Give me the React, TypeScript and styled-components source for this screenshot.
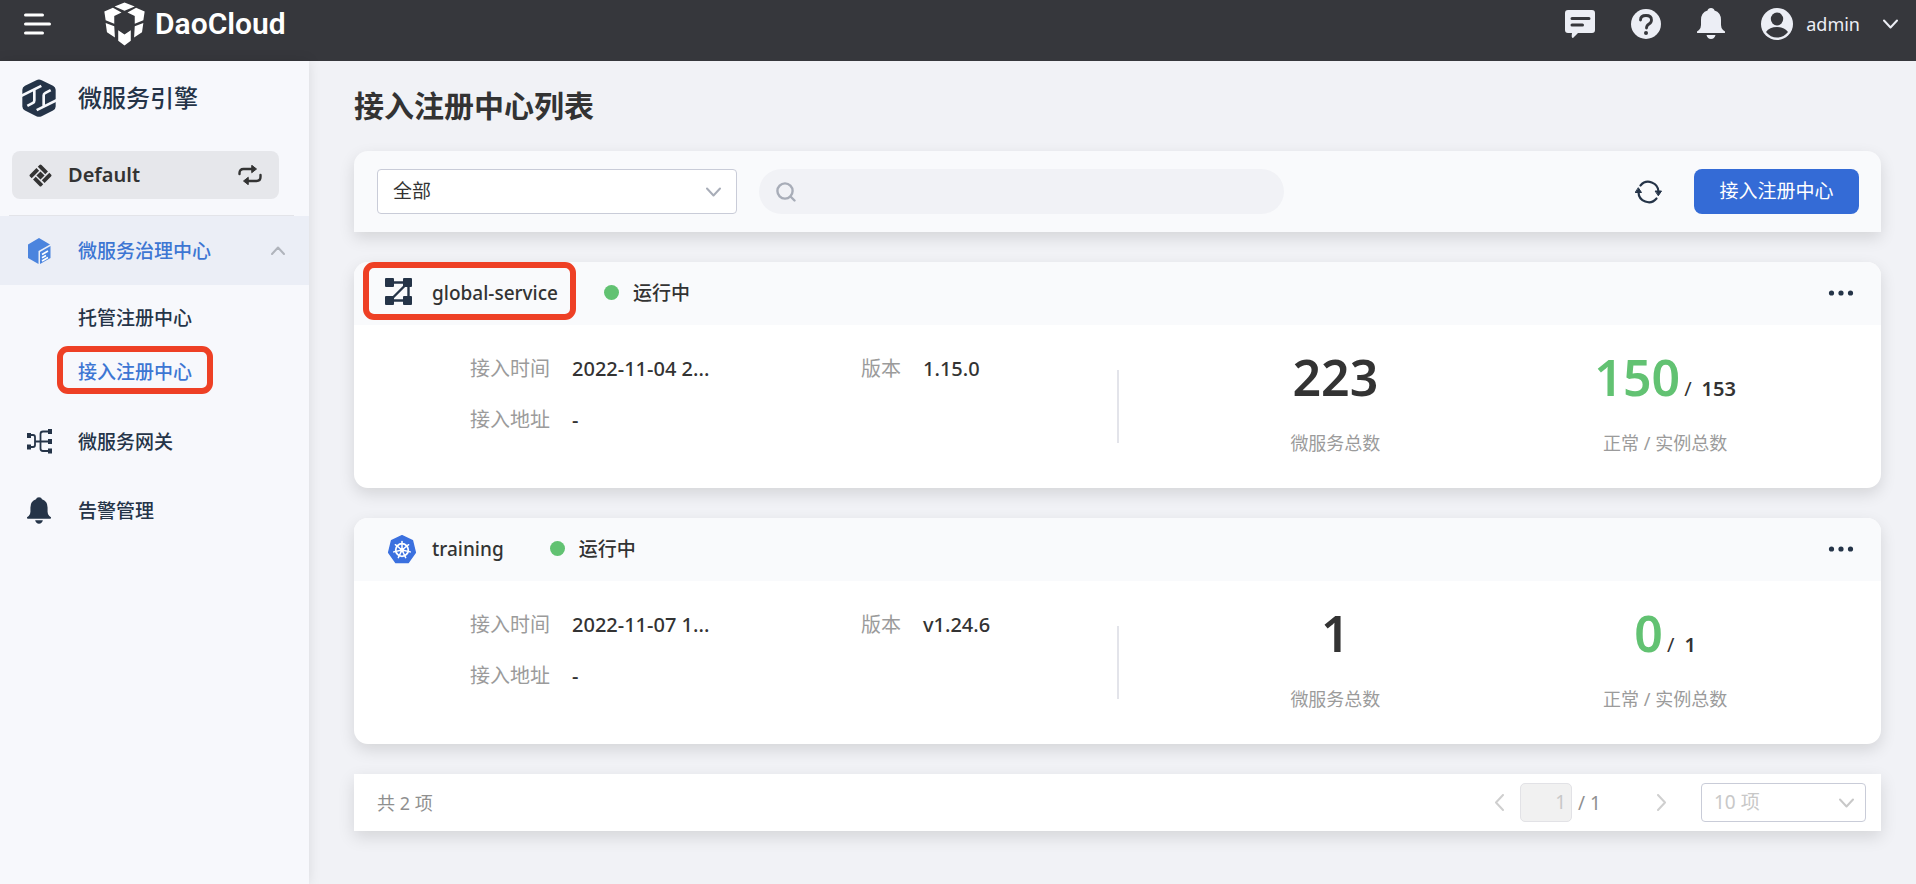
import React from 'react';
import styled, { createGlobalStyle } from 'styled-components';

const GlobalStyle = createGlobalStyle`
  * { box-sizing: border-box; }
  body {
    margin: 0;
    background: #f1f2f6;
    color: #333;
    font-family: "Noto Sans", "Noto Sans CJK SC", sans-serif;
    font-size: 19px;
    line-height: 28px;
  }
  button, input, select { font: inherit; color: inherit; margin: 0; }
  button { border: 0; padding: 0; background: none; cursor: pointer; }
  a { color: inherit; text-decoration: none; }
  h1, h2, h3, p, ul, dl, dd { margin: 0; padding: 0; }
  ul { list-style: none; }
  svg { display: block; flex: none; }
`;

const Page = styled.div`
  display: flex;
  flex-direction: column;
  min-height: 100vh;
`;

const Header = styled.header`
  display: flex;
  align-items: center;
  height: 61px;
  padding: 0 18px 14px 24px;
  background: #36373c;
  color: #eceef5;
`;

const Brand = styled.a`
  display: flex;
  align-items: center;
  gap: 10px;
  margin-left: 52px;
  color: #fff;
  font-family: Roboto, sans-serif;
  font-size: 30px;
  font-weight: 600;
`;

const HeaderActions = styled.div`
  display: flex;
  align-items: center;
  gap: 36px;
  margin-left: auto;
`;

const UserButton = styled.button`
  display: flex;
  align-items: center;
  gap: 13px;
  font-size: 18px;

  svg:last-child { margin-left: 10px; }
`;

const Body = styled.div`
  display: flex;
  flex: 1;
`;

const Sidebar = styled.nav`
  flex: none;
  width: 309px;
  background: #f7f8fc;
  color: #253448;
  box-shadow: 0 0 12px rgba(0, 0, 0, 0.1);
`;

const Product = styled.h2`
  display: flex;
  align-items: center;
  gap: 22px;
  height: 74px;
  padding-left: 22px;
  font-size: 24px;
  font-weight: 500;
`;

const Workspace = styled.button`
  display: flex;
  align-items: center;
  gap: 16px;
  width: calc(100% - 42px);
  height: 48px;
  margin: 16px 30px 16px 12px;
  padding: 0 17px;
  border-radius: 8px;
  background: #e6e7eb;
  color: #333;
  font-size: 20px;
  font-weight: 600;

  svg:last-child { margin-left: auto; }
`;

const Divider = styled.hr`
  height: 1px;
  margin: 0 15px 0 9px;
  border: 0;
  background: #e3e4e9;
`;

const MenuLink = styled.a<{ $active?: boolean }>`
  display: flex;
  align-items: center;
  height: 69px;
  padding: 0 24px 0 26px;
  font-weight: 500;
  background: ${(p) => (p.$active ? '#ebeef6' : 'transparent')};
  color: ${(p) => (p.$active ? '#3d76d3' : 'inherit')};
`;

const MenuIconSlot = styled.span`
  display: flex;
  justify-content: center;
  width: 26px;
  margin-right: 26px;
`;

const MenuArrow = styled.span`
  margin-left: auto;
  color: #b0b4bc;
`;

const SubMenu = styled.ul`
  padding: 6px 0 8px;
`;

const SubLink = styled.a<{ $active?: boolean }>`
  position: relative;
  display: flex;
  align-items: center;
  height: 54px;
  padding-left: 78px;
  font-weight: 500;
  color: ${(p) => (p.$active ? '#3d76d3' : 'inherit')};
`;

const Callout = styled.span`
  position: absolute;
  border: 6px solid #ee4025;
  border-radius: 11px;
  pointer-events: none;
`;

const SubCallout = styled(Callout)`
  left: 57px;
  top: 1px;
  width: 156px;
  height: 48px;
`;

const NameCallout = styled(Callout)`
  inset: 0 -18px 3px -22px;
`;

const Main = styled.main`
  display: flex;
  flex: 1;
  flex-direction: column;
  gap: 30px;
  min-width: 0;
  padding: 25px 35px 30px 45px;
`;

const Title = styled.h1`
  height: 40px;
  margin-bottom: -5px;
  font-size: 30px;
  font-weight: 600;
  line-height: 40px;
`;

const shadow = '0 6px 16px rgba(0, 0, 0, 0.12)';

const Toolbar = styled.form`
  display: flex;
  align-items: center;
  height: 81px;
  padding: 0 22px 0 23px;
  border-radius: 14px 14px 0 0;
  background: #f9fafc;
  box-shadow: ${shadow};
`;

const SelectBox = styled.div<{ $size: 'large' | 'small' }>`
  position: relative;
  width: ${(p) => (p.$size === 'large' ? 360 : 165)}px;
  height: ${(p) => (p.$size === 'large' ? 45 : 39)}px;
  color: ${(p) => (p.$size === 'large' ? '#a8adb8' : '#c8c8c8')};

  select {
    width: 100%;
    height: 100%;
    padding: 0 40px 2px ${(p) => (p.$size === 'large' ? 15 : 12)}px;
    border: 1px solid #c9ccd8;
    border-radius: 4px;
    background: #fff;
    color: ${(p) => (p.$size === 'large' ? '#333' : '#c8c8c8')};
    opacity: 1;
    appearance: none;
  }

  svg {
    position: absolute;
    top: 50%;
    right: ${(p) => (p.$size === 'large' ? 16 : 12)}px;
    margin-top: -5px;
    pointer-events: none;
  }
`;

const Search = styled.label`
  display: flex;
  align-items: center;
  gap: 12px;
  width: 525px;
  height: 45px;
  margin-left: 22px;
  padding: 0 17px;
  border-radius: 23px;
  background: #f1f2f6;
  color: #a8adb8;

  input {
    flex: 1;
    min-width: 0;
    border: 0;
    outline: 0;
    background: none;
    color: #333;
  }
`;

const RefreshButton = styled.button`
  margin: 0 32px 0 auto;
  color: #253448;
`;

const PrimaryButton = styled.button`
  width: 165px;
  height: 45px;
  padding-bottom: 2px;
  border-radius: 8px;
  background: #346bd6;
  color: #fff;
  font-size: 19px;
`;

const Card = styled.article`
  border-radius: 14px;
  background: #fff;
  box-shadow: ${shadow};
`;

const CardHeader = styled.header`
  display: flex;
  align-items: stretch;
  gap: 46px;
  height: 63px;
  padding: 0 27px 2px 31px;
  border-radius: 14px 14px 0 0;
  background: #f9fafc;
`;

const CardName = styled.h3`
  position: relative;
  display: flex;
  align-items: center;
  font-size: 19px;
  font-weight: 500;
`;

const CardIcon = styled.span`
  display: flex;
  width: 47px;
`;

const Status = styled.span`
  display: flex;
  align-items: center;
  gap: 14px;
  font-weight: 500;

  &::before {
    content: "";
    width: 15px;
    height: 15px;
    border-radius: 50%;
    background: #62c272;
  }
`;

const MoreButton = styled.button`
  margin-left: auto;
  color: #253448;
`;

const CardBody = styled.div`
  display: flex;
  height: 163px;
`;

const Info = styled.dl`
  display: grid;
  flex: none;
  width: 50%;
  grid-template-columns: 391px 1fr;
  grid-auto-rows: 51px;
  align-items: center;
  padding: 18px 0 0 116px;
  font-size: 20px;
`;

const InfoItem = styled.div`
  display: flex;
  gap: 22px;

  dt { color: #9b9b9b; }
  dd { font-weight: 500; }
`;

const Stats = styled.div`
  display: flex;
  flex: 1;
  align-items: flex-start;
  padding-right: 51px;

  &::before {
    content: "";
    width: 2px;
    height: 73px;
    margin: 45px 52px 0 -1px;
    background: #e3e4ea;
  }
`;

const Stat = styled.div`
  flex: 1;
  padding-top: 20px;
  text-align: center;
`;

const StatValue = styled.p`
  display: flex;
  align-items: baseline;
  justify-content: center;
  height: 64px;
  font-size: 20px;
  font-weight: 600;
  line-height: 64px;
`;

const BigNumber = styled.span<{ $good?: boolean }>`
  font-size: 50px;
  color: ${(p) => (p.$good ? '#62c272' : '#333')};
`;

const Slash = styled.span`
  margin: 0 10px 0 4px;
  font-weight: 400;
`;

const StatLabel = styled.p`
  margin-top: 20px;
  color: #9b9b9b;
  font-size: 18px;
`;

const Pagination = styled.footer`
  display: flex;
  align-items: center;
  height: 57px;
  padding: 0 15px 0 23px;
  background: #fff;
  color: #8f8f8f;
  box-shadow: ${shadow};
  font-size: 18px;
`;

const Pager = styled.div`
  display: flex;
  align-items: center;
  margin-left: auto;
  font-size: 19px;

  button { color: #cfcfcf; }

  input {
    width: 52px;
    height: 39px;
    margin: 0 6px 0 16px;
    padding: 0 5px 2px;
    border: 1px solid #e2e2e6;
    border-radius: 5px;
    background: #f1f1f1;
    color: #c8c8c8;
    text-align: right;
  }

  button:last-of-type { margin: 0 34px 0 56px; }
`;

type ChevronProps = { dir: 'up' | 'down' | 'left' | 'right'; width?: number };

function Chevron({ dir, width = 2 }: ChevronProps) {
  const shapes = {
    down: { w: 15, h: 10, d: 'M1 1.5 7.5 8.5 14 1.5' },
    up: { w: 14, h: 9, d: 'M1 8 7 1.5 13 8' },
    left: { w: 10, h: 17, d: 'M9 1 2 8.5 9 16' },
    right: { w: 10, h: 17, d: 'M1 1 8 8.5 1 16' },
  };
  const s = shapes[dir];
  return (
    <svg width={s.w} height={s.h} viewBox={`0 0 ${s.w} ${s.h}`} fill="none" stroke="currentColor" strokeWidth={width} strokeLinecap="round" strokeLinejoin="round" aria-hidden="true">
      <path d={s.d} />
    </svg>
  );
}

const MenuIcon = () => (
  <svg width="28" height="22" viewBox="0 0 28 22" stroke="#fff" strokeWidth="3" strokeLinecap="round" aria-hidden="true">
    <path d="M1.5 2H18.500M1.500 11H25.500M1.500 20H18.500" />
  </svg>
);

const BrandLogo = () => (
  <svg width="41" height="44" viewBox="23 5 124 132" fill="#fff" aria-hidden="true">
    <path d="M55 18 85 6l31 12-31 13zM24 33l26-11 26 14-22 11v23l-26-10zM146 33l-26-11-26 14 22 11v23l26-10zM28 68l26 10 2 34-24-16zM142 68l-26 10-2 34 24-16zM66 90l19 13 19-13v32l-19 14-19-14z" />
  </svg>
);

const MessageIcon = () => (
  <svg width="30" height="28" viewBox="0 0 30 28" aria-hidden="true">
    <path d="M3 0h24a3 3 0 0 1 3 3v17a3 3 0 0 1-3 3H13l-5 5q-2 0-1-5H3a3 3 0 0 1-3-3V3a3 3 0 0 1 3-3z" fill="currentColor" />
    <path d="M7 8.500h17M7 15h10.500" stroke="#36373c" strokeWidth="3" strokeLinecap="round" />
  </svg>
);

const HelpIcon = () => (
  <svg width="30" height="30" viewBox="0 0 30 30" aria-hidden="true">
    <circle cx="15" cy="15" r="15" fill="currentColor" />
    <path d="M9.500 11q0-4.500 5.500-4.500t5.500 4.500q0 2.500-2.500 4-2.500 1.500-2.500 4" fill="none" stroke="#36373c" strokeWidth="2.800" strokeLinecap="round" />
    <circle cx="15" cy="24" r="2" fill="#36373c" />
  </svg>
);

const BellIcon = ({ size = 28 }: { size?: number }) => (
  <svg width={size} height={size + 3} viewBox="0 0 28 31" fill="currentColor" aria-hidden="true">
    <path d="M14 0q3 0 3.500 2.500 6.500 2 6.500 9.500v5q0 3 2 5l2 1.500q.5 1.500-1 1.500H1q-1.500 0-1-1.500L2 22q2-2 2-5v-5q0-7.500 6.500-9.500Q11 0 14 0zM9.500 27h9q-1 4-4.500 4t-4.500-4z" />
  </svg>
);

const AvatarIcon = () => (
  <svg width="32" height="32" viewBox="0 0 32 32" aria-hidden="true">
    <circle cx="16" cy="16" r="16" fill="currentColor" />
    <ellipse cx="16" cy="11" rx="6.200" ry="6.500" fill="#36373c" />
    <path d="M5 24q3.500-5 11-5t11 5q-4.500 5.500-11 5.500T5 24z" fill="#36373c" />
  </svg>
);

const EngineIcon = () => (
  <svg width="34" height="38" viewBox="66 239 102 113" aria-hidden="true">
    <path d="M109 242q8-4 16 0l34 17q8 4 8 12v50q0 8-8 12l-34 17q-8 4-16 0l-34-17q-8-4-8-12v-50q0-8 8-12z" fill="#253448" />
    <path d="M60 291 124 259M103 272v31q0 5-4 7L82 319M174 300 110 332M131 319v-31q0-5 4-7L152 272" fill="none" stroke="#f7f8fc" strokeWidth="8" />
  </svg>
);

const WorkspaceIcon = () => (
  <svg width="23" height="23" viewBox="0 0 24 24" aria-hidden="true">
    <g transform="rotate(45 12 12)" fill="#333">
      <path d="M3.500 5q0-1.500 1.500-1.500h9.500v4h-11zM16.500 3.500H19q1.500 0 1.500 1.500v9.500h-4zM9.500 16.500h11V19q0 1.500-1.500 1.500H9.500zM3.500 9.500h4v11H5q-1.500 0-1.500-1.500zM9 9h6v6H9z" />
    </g>
  </svg>
);

const SwapIcon = () => (
  <svg width="24" height="20" viewBox="0 0 24 20" fill="none" stroke="#333" strokeWidth="2.400" strokeLinecap="round" aria-hidden="true">
    <path d="M1.500 9V8q0-4 4-4H14M22.500 10v2q0 4-4 4H10" />
    <path d="M14 .5 18.500 4 14 7.500zM10 12.500 5.500 16l4.500 3.500z" fill="#333" strokeWidth="1" strokeLinejoin="round" />
  </svg>
);

const CubeIcon = () => (
  <svg width="24" height="26" viewBox="0 0 24 26" aria-hidden="true">
    <path d="M12 0 23 6.500 11.500 13v13L1 20V6.500z" fill="#4b84de" />
    <path d="M13 14 23.500 8v12L13 26z" fill="#4b84de" />
    <path d="M15 16.500 21 13M15 19.800l4-2.300M15 23l6-3.500" stroke="#fff" strokeWidth="1.600" />
  </svg>
);

const GatewayIcon = () => (
  <svg width="25" height="25" viewBox="0 0 25 25" aria-hidden="true">
    <path d="M2 6h4q2 0 2 2v8q0 2-2 2H2M8 12.500h14M22 2.500h-6q-2.500 0-2.500 2.500v14.500q0 2.500 2.500 2.500h6" fill="none" stroke="#253448" strokeWidth="1.800" />
    <path d="M0 4h4v5H0zM0 15.500h4v5H0zM21 0h4v5h-4zM21 10h4v5h-4zM21 19.500h4v5h-4z" fill="#253448" />
  </svg>
);

const SearchIcon = () => (
  <svg width="20" height="20" viewBox="0 0 20 20" fill="none" stroke="currentColor" strokeWidth="2.400" strokeLinecap="round" aria-hidden="true">
    <circle cx="9" cy="9" r="7.600" />
    <path d="m14.500 14.500 4 4" />
  </svg>
);

const RefreshIcon = () => (
  <svg width="27" height="24" viewBox="0 0 27 24" fill="none" stroke="currentColor" strokeWidth="2.200" strokeLinecap="round" aria-hidden="true">
    <path d="M5.500 5.500a10.200 10.200 0 0 1 18 6.500M21.500 18.500a10.200 10.200 0 0 1-18-6.500" />
    <path d="M20.500 11h6L23.500 15.500zM.5 12.500h6L3.500 8z" fill="currentColor" strokeWidth="1" strokeLinejoin="round" />
  </svg>
);

const MoreIcon = () => (
  <svg width="26" height="6" viewBox="0 0 26 6" fill="currentColor" aria-hidden="true">
    <circle cx="3.500" cy="3" r="2.600" />
    <circle cx="13" cy="3" r="2.600" />
    <circle cx="22.500" cy="3" r="2.600" />
  </svg>
);

const MeshIcon = () => (
  <svg width="27" height="30" viewBox="0 0 27 30" fill="#253448" aria-hidden="true">
    <path d="M5 4.500H22M5 22.500H22M23.500 5v17M5 22.500 22.500 5" stroke="#253448" strokeWidth="2.400" />
    <rect width="9" height="9" rx="1" />
    <rect x="18" width="9" height="9" rx="1" />
    <rect y="18" width="9" height="9" rx="1" />
    <rect x="18" y="18" width="9" height="9" rx="1" />
  </svg>
);

const KubernetesIcon = () => {
  const angles = [0, 1, 2, 3, 4, 5, 6].map((i) => (i * 360) / 7);
  return (
    <svg width="34" height="31" viewBox="-3 -2 34 31" aria-hidden="true">
      <path d="M14 .8 24.500 5.800 27.300 17.500 20.200 27.500H7.800L.7 17.500 3.500 5.800z" fill="#3b70df" stroke="#3b70df" strokeWidth="1.500" strokeLinejoin="round" />
      <g fill="none" stroke="#fff" strokeLinecap="round">
        <circle cx="14" cy="15" r="6.300" strokeWidth="1.800" />
        {angles.map((a) => (
          <path key={a} d="M14 15V6.500" strokeWidth="1.500" transform={`rotate(${a} 14 15)`} />
        ))}
      </g>
      <circle cx="14" cy="15" r="2.200" fill="#fff" />
    </svg>
  );
};

type Registry = {
  name: string;
  icon: React.ReactNode;
  time: string;
  version: string;
  services: number;
  healthy: number;
  instances: number;
  highlighted?: boolean;
};

const registries: Registry[] = [
  { name: 'global-service', icon: <MeshIcon />, time: '2022-11-04 2...', version: '1.15.0', services: 223, healthy: 150, instances: 153, highlighted: true },
  { name: 'training', icon: <KubernetesIcon />, time: '2022-11-07 1...', version: 'v1.24.6', services: 1, healthy: 0, instances: 1 },
];

function RegistryCard({ item }: { item: Registry }) {
  return (
    <Card>
      <CardHeader>
        <CardName>
          <CardIcon>{item.icon}</CardIcon>
          {item.name}
          {item.highlighted && <NameCallout />}
        </CardName>
        <Status>运行中</Status>
        <MoreButton type="button" aria-label="更多操作"><MoreIcon /></MoreButton>
      </CardHeader>
      <CardBody>
        <Info>
          <InfoItem><dt>接入时间</dt><dd>{item.time}</dd></InfoItem>
          <InfoItem><dt>版本</dt><dd>{item.version}</dd></InfoItem>
          <InfoItem><dt>接入地址</dt><dd>-</dd></InfoItem>
        </Info>
        <Stats>
          <Stat>
            <StatValue><BigNumber>{item.services}</BigNumber></StatValue>
            <StatLabel>微服务总数</StatLabel>
          </Stat>
          <Stat>
            <StatValue>
              <BigNumber $good>{item.healthy}</BigNumber>
              <Slash>/</Slash>
              {item.instances}
            </StatValue>
            <StatLabel>正常 / 实例总数</StatLabel>
          </Stat>
        </Stats>
      </CardBody>
    </Card>
  );
}

export default function App() {
  return (
    <Page>
      <GlobalStyle />
      <Header>
        <button type="button" aria-label="菜单"><MenuIcon /></button>
        <Brand href="#"><BrandLogo />DaoCloud</Brand>
        <HeaderActions>
          <button type="button" aria-label="消息"><MessageIcon /></button>
          <button type="button" aria-label="帮助"><HelpIcon /></button>
          <button type="button" aria-label="通知"><BellIcon /></button>
          <UserButton type="button"><AvatarIcon />admin<Chevron dir="down" /></UserButton>
        </HeaderActions>
      </Header>
      <Body>
        <Sidebar>
          <Product><EngineIcon />微服务引擎</Product>
          <Workspace type="button"><WorkspaceIcon />Default<SwapIcon /></Workspace>
          <Divider />
          <MenuLink href="#" $active>
            <MenuIconSlot><CubeIcon /></MenuIconSlot>
            微服务治理中心
            <MenuArrow><Chevron dir="up" /></MenuArrow>
          </MenuLink>
          <SubMenu>
            <li><SubLink href="#">托管注册中心</SubLink></li>
            <li><SubLink href="#" $active>接入注册中心<SubCallout /></SubLink></li>
          </SubMenu>
          <MenuLink href="#"><MenuIconSlot><GatewayIcon /></MenuIconSlot>微服务网关</MenuLink>
          <MenuLink href="#"><MenuIconSlot><BellIcon size={24} /></MenuIconSlot>告警管理</MenuLink>
        </Sidebar>
        <Main>
          <Title>接入注册中心列表</Title>
          <Toolbar onSubmit={(e) => e.preventDefault()}>
            <SelectBox $size="large">
              <select aria-label="类型"><option>全部</option></select>
              <Chevron dir="down" />
            </SelectBox>
            <Search>
              <SearchIcon />
              <input type="text" aria-label="搜索" />
            </Search>
            <RefreshButton type="button" aria-label="刷新"><RefreshIcon /></RefreshButton>
            <PrimaryButton type="button">接入注册中心</PrimaryButton>
          </Toolbar>
          {registries.map((item) => <RegistryCard key={item.name} item={item} />)}
          <Pagination>
            共 2 项
            <Pager>
              <button type="button" disabled aria-label="上一页"><Chevron dir="left" /></button>
              <input type="text" defaultValue="1" disabled aria-label="页码" />
              / 1
              <button type="button" disabled aria-label="下一页"><Chevron dir="right" /></button>
              <SelectBox $size="small">
                <select disabled aria-label="每页条数"><option>10 项</option></select>
                <Chevron dir="down" />
              </SelectBox>
            </Pager>
          </Pagination>
        </Main>
      </Body>
    </Page>
  );
}
